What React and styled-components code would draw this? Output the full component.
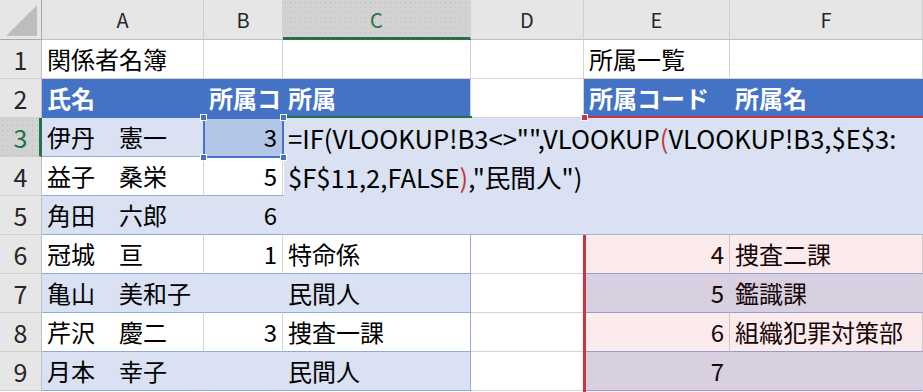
import React from "react";
import styled, { createGlobalStyle, css } from "styled-components";

const GlobalStyle = createGlobalStyle`
  html, body {
    margin: 0;
    padding: 0;
    background: #ffffff;
  }
  body {
    font-family: "Noto Sans CJK JP", "Noto Sans", sans-serif;
  }
`;

const GREEN = "#217346";
const BLUE = "#4472c4";
const BAND = "#d9e1f2";
const GRID = "#d4d4d4";
const TABLE_LINE = "#8ea9db";
const TABLE_EDGE = "#95abdd";
const RED = "#c8363f";

const COLUMNS = [
  { key: "A", width: 162 },
  { key: "B", width: 79 },
  { key: "C", width: 188 },
  { key: "D", width: 113 },
  { key: "E", width: 146 },
  { key: "F", width: 193 },
];

const ROWS = [
  { n: 1, kind: "plain", cells: ["関係者名簿", "", "", "", "所属一覧", ""] },
  { n: 2, kind: "head", cells: ["氏名", "所属コード", "所属", "", "所属コード", "所属名"] },
  { n: 3, kind: "band", cells: ["伊丹　憲一", 3, "", "", "", ""] },
  { n: 4, kind: "white", cells: ["益子　桑栄", 5, "", "", "", ""] },
  { n: 5, kind: "band", cells: ["角田　六郎", 6, "", "", "", ""] },
  { n: 6, kind: "white", cells: ["冠城　亘", 1, "特命係", "", 4, "捜査二課"] },
  { n: 7, kind: "band", cells: ["亀山　美和子", "", "民間人", "", 5, "鑑識課"] },
  { n: 8, kind: "white", cells: ["芹沢　慶二", 3, "捜査一課", "", 6, "組織犯罪対策部"] },
  { n: 9, kind: "band", cells: ["月本　幸子", "", "民間人", "", 7, ""] },
];

const ACTIVE_COL = "C";
const ACTIVE_ROW = 3;

// fill and border colours of one cell, from the row kind and the column
const cellLook = (kind, col, n) => {
  if (col === 3 || kind === "plain") {
    return { fill: "#ffffff", vline: GRID, hline: GRID };
  }
  if (kind === "head") {
    return { fill: BLUE, vline: col === 2 ? "#c9d3ea" : BLUE, hline: BLUE, head: true };
  }
  const edge = col === 2;
  if (kind === "band") {
    const fill = col === 1 && n === 3 ? "#b4c6e7" : BAND;
    return { fill, vline: edge ? TABLE_EDGE : BAND, hline: TABLE_LINE };
  }
  return { fill: "#ffffff", vline: edge ? TABLE_EDGE : GRID, hline: TABLE_LINE };
};

const Sheet = styled.div`
  position: relative;
  display: grid;
  grid-template-columns: 42px ${COLUMNS.map((c) => `${c.width}px`).join(" ")};
  grid-template-rows: 40px repeat(9, 39px);
  width: 923px;
  height: 392px;
  overflow: hidden;
  background: #ffffff;
`;

const selectedHead = css`
  background-color: #d2d2d2;
  background-image: radial-gradient(#bcbcbc 0.7px, transparent 0.9px);
  background-size: 5px 5px;
  color: ${GREEN};
`;

const Corner = styled.div`
  position: relative;
  box-sizing: border-box;
  background: #e6e6e6;
  border-right: 1px solid #a9a9a9;
  border-bottom: 1px solid #a9a9a9;

  &::after {
    content: "";
    position: absolute;
    left: 6px;
    top: 5px;
    width: 31px;
    height: 31px;
    background: #bdbdbd;
    clip-path: polygon(100% 0, 100% 100%, 0 100%);
  }
`;

const ColHead = styled.div`
  box-sizing: border-box;
  display: flex;
  align-items: center;
  justify-content: center;
  background: #e6e6e6;
  color: #262626;
  font-size: 20px;
  border-right: 1px solid #cfcfcf;
  border-bottom: 1px solid #bfbfbf;
  ${(p) =>
    p.$active &&
    css`
      ${selectedHead};
      border-bottom: 3px solid ${GREEN};
      padding-top: 2px;
    `}
`;

const RowHead = styled.div`
  box-sizing: border-box;
  display: flex;
  align-items: center;
  justify-content: center;
  background: #e6e6e6;
  color: #262626;
  font-size: 25px;
  border-right: 1px solid #bfbfbf;
  border-bottom: 1px solid #d0d0d0;
  ${(p) =>
    p.$active &&
    css`
      ${selectedHead};
      border-right: 3px solid ${GREEN};
      padding-left: 2px;
    `}
`;

const Cell = styled.div`
  box-sizing: border-box;
  padding: 0 5px 0 5px;
  font-size: 24px;
  line-height: 37px;
  white-space: nowrap;
  overflow: hidden;
  text-align: ${(p) => (p.$num ? "right" : "left")};
  background: ${(p) => p.$fill};
  color: ${(p) => (p.$head ? "#ffffff" : "#000000")};
  font-weight: ${(p) => (p.$head ? 700 : 400)};
  border-right: 1px solid ${(p) => p.$vline};
  border-bottom: 1px solid ${(p) => p.$hline};
`;

// $E$3:$F$11 reference box, runs off the right and bottom of the view
const RangeBox = styled.div`
  position: absolute;
  left: 583px;
  top: 116px;
  width: 400px;
  height: 320px;
  box-sizing: border-box;
  border-top: 2px solid ${RED};
  border-left: 3px solid ${RED};
  background: rgba(214, 60, 70, 0.1);
  pointer-events: none;
`;

// in-cell editor spilling from C3 over the neighbouring cells
const Editor = styled.div`
  position: absolute;
  left: 284px;
  top: 118px;
  width: 639px;
  height: 117px;
  box-sizing: border-box;
  padding-left: 4px;
  background: ${BAND};
  border-bottom: 1px solid #9fb2df;
  font-size: 25.6px;
  line-height: 39px;
  white-space: pre;
  color: #000000;
`;

const Paren = styled.span`
  color: ${RED};
`;

const ActiveCell = styled.div`
  position: absolute;
  left: 282px;
  top: 116px;
  width: 190px;
  height: 42px;
  box-sizing: border-box;
  border-top: 2px solid ${GREEN};
  border-left: 2px solid ${GREEN};
  pointer-events: none;
`;

// VLOOKUP!B3 reference box
const RefBox = styled.div`
  position: absolute;
  left: 203px;
  top: 117px;
  width: 81px;
  height: 41px;
  box-sizing: border-box;
  border: 2px solid ${BLUE};
  pointer-events: none;
`;

const Handle = styled.div`
  position: absolute;
  left: ${(p) => p.$x - 3}px;
  top: ${(p) => p.$y - 3}px;
  width: 7px;
  height: 7px;
  box-sizing: border-box;
  background: ${(p) => p.$color};
  border: 1px solid #ffffff;
`;

export default function App() {
  return (
    <>
      <GlobalStyle />
      <Sheet>
        <Corner />
        {COLUMNS.map((c) => (
          <ColHead key={c.key} $active={c.key === ACTIVE_COL}>
            {c.key}
          </ColHead>
        ))}
        {ROWS.map((row) => (
          <React.Fragment key={row.n}>
            <RowHead $active={row.n === ACTIVE_ROW}>{row.n}</RowHead>
            {row.cells.map((value, col) => {
              const look = cellLook(row.kind, col, row.n);
              return (
                <Cell
                  key={col}
                  $num={typeof value === "number"}
                  $fill={look.fill}
                  $vline={look.vline}
                  $hline={look.hline}
                  $head={look.head}
                >
                  {value}
                </Cell>
              );
            })}
          </React.Fragment>
        ))}

        <RangeBox />
        <Editor>
          {'=IF(VLOOKUP!B3<>"",VLOOKUP'}
          <Paren>(</Paren>
          {"VLOOKUP!B3,$E$3:\n$F$11,2,FALSE"}
          <Paren>)</Paren>
          {',"民間人")'}
        </Editor>
        <ActiveCell />
        <RefBox />
        <Handle $x={203} $y={117} $color={BLUE} />
        <Handle $x={283} $y={117} $color={BLUE} />
        <Handle $x={203} $y={157} $color={BLUE} />
        <Handle $x={283} $y={157} $color={BLUE} />
        <Handle $x={584} $y={117} $color={RED} />
      </Sheet>
    </>
  );
}
